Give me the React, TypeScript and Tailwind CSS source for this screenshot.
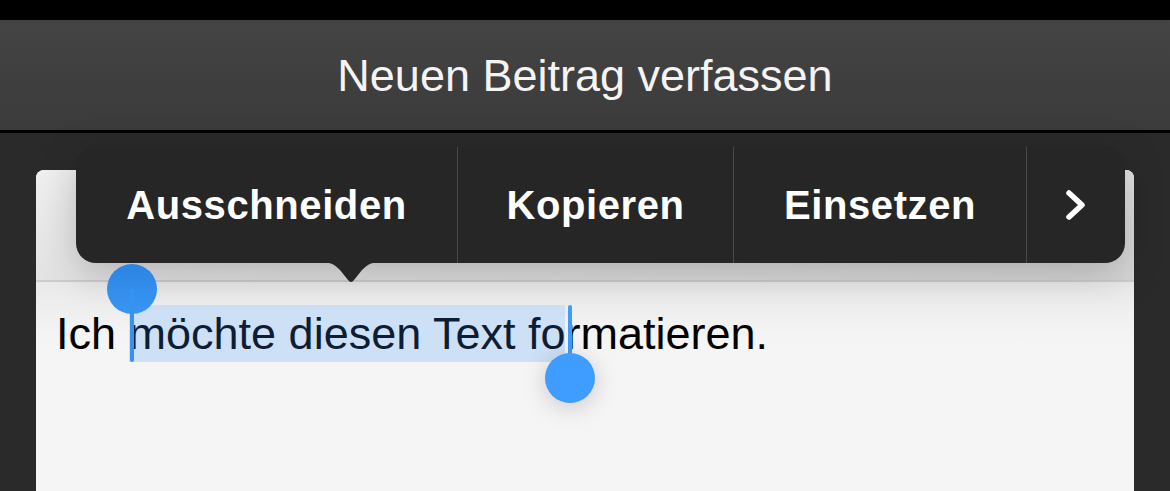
export default function App() {
  const font = { fontFamily: '"Liberation Sans", Arial, sans-serif' };

  return (
    <div className="relative h-[491px] w-[1170px] overflow-hidden bg-[#2a2a2a]" style={font}>
      {/* status bar */}
      <div className="h-[20px] bg-black" />

      {/* nav bar */}
      <div className="flex h-[113px] items-center justify-center border-b-[3px] border-black bg-gradient-to-b from-[#444444] to-[#3b3b3b]">
        <span className="text-[45px] leading-none text-[#f4f4f4]">Neuen Beitrag verfassen</span>
      </div>

      {/* editor card */}
      <div className="px-[36px] pt-[37px]">
        <div className="overflow-hidden rounded-t-[8px] bg-[#f5f5f5]">
          <div className="h-[112px] border-b-2 border-[#cdcdcd] bg-gradient-to-br from-[#f0f0f0] to-[#d6d6d6]" />
          <div className="h-[300px] bg-gradient-to-b from-[#eaeaea] to-[#f5f5f5] to-[20%] pl-[20px] pt-[23px]">
            <p className="text-[45px] leading-[57px] text-black">
              <span className="inline-block whitespace-pre">Ich </span>
              <span className="inline-block whitespace-pre bg-[#cde0f5] text-[#0d1d33]">möchte diesen Text fo</span>
              <span className="inline-block whitespace-pre">rmatieren.</span>
            </p>
          </div>
        </div>
      </div>

      {/* edit menu */}
      <div className="absolute left-[76px] top-[147px] h-[116px] w-[1049px] rounded-[20px] bg-[#262626] shadow-[0_10px_40px_rgba(0,0,0,0.22)]">
        <div className="flex h-full text-[40px] font-bold tracking-[0.6px] text-white">
          <div className="flex w-[381px] items-center justify-center">Ausschneiden</div>
          <div className="flex w-[276px] items-center justify-center border-l border-[#4a4a4a]">Kopieren</div>
          <div className="flex w-[293px] items-center justify-center border-l border-[#4a4a4a]">Einsetzen</div>
          <div className="flex flex-1 items-center justify-center border-l border-[#4a4a4a]">
            <svg width="22" height="32" viewBox="0 0 22 32" fill="none">
              <path d="M4 4 L17 16 L4 28" stroke="white" strokeWidth="5.5" strokeLinecap="round" strokeLinejoin="round" />
            </svg>
          </div>
        </div>
        <svg className="absolute left-[244px] top-[115px]" width="62" height="22" viewBox="0 0 62 22">
          <path d="M0 0 C10 0 14 2 20 8 L28 18 Q31 22 34 18 L42 8 C48 2 52 0 62 0 Z" fill="#262626" />
        </svg>
      </div>

      {/* left selection handle */}
      <div className="absolute left-[107px] top-[264px] flex w-[50px] flex-col items-center">
        <div className="h-[50px] w-[50px] rounded-full bg-gradient-to-b from-[#2d84e2] to-[#3896f4]" />
        <div className="-mt-[25px] h-[73px] w-[4px] rounded-b-full bg-[#3592f0]" />
      </div>

      {/* right selection handle */}
      <div className="absolute left-[545px] top-[305px] flex w-[50px] flex-col items-center">
        <div className="h-[73px] w-[4px] rounded-t-full bg-[#3d9cfe]" />
        <div className="-mt-[25px] h-[50px] w-[50px] rounded-full bg-[#3e9dff] shadow-[0_4px_24px_rgba(0,0,0,0.18)]" />
      </div>
    </div>
  );
}
